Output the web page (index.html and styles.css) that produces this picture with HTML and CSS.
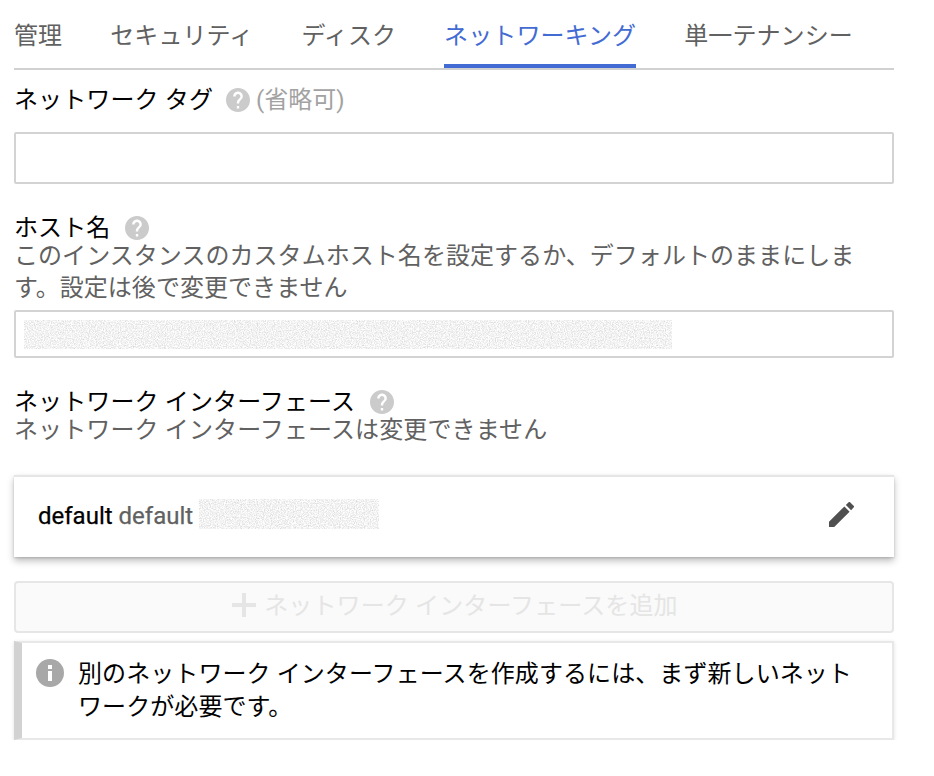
FILE: index.html
```html
<!DOCTYPE html>
<html lang="ja">
<head>
<meta charset="utf-8">
<title>ネットワーキング</title>
<link rel="stylesheet" href="styles.css">
</head>
<body>
<svg class="defs" width="0" height="0" aria-hidden="true">
  <filter id="grain" x="0" y="0" width="100%" height="100%" color-interpolation-filters="sRGB">
    <feTurbulence type="fractalNoise" baseFrequency="0.87" numOctaves="2" seed="4"/>
    <feColorMatrix values="0.3 0 0 0 0.8  0.3 0 0 0 0.8  0.3 0 0 0 0.8  0 0 0 0 1"/>
  </filter>
  <symbol id="help" viewBox="2 2 20 20"><path d="M12 2C6.48 2 2 6.48 2 12s4.48 10 10 10 10-4.48 10-10S17.52 2 12 2zm1 17h-2v-2h2v2zm2.07-7.75l-.9.92C13.45 12.9 13 13.5 13 15h-2v-.5c0-1.1.45-2.1 1.17-2.83l1.24-1.26c.37-.36.59-.86.59-1.41 0-1.1-.9-2-2-2s-2 .9-2 2H8c0-2.21 1.79-4 4-4s4 1.79 4 4c0 .88-.36 1.68-.93 2.25z"/></symbol>
</svg>
<main class="panel">
  <nav class="tabs">
    <a class="tab">管理</a>
    <a class="tab">セキュリティ</a>
    <a class="tab">ディスク</a>
    <a class="tab active">ネットワーキング</a>
    <a class="tab">単一テナンシー</a>
  </nav>

  <section class="field tags">
    <div class="label">ネットワーク タグ<svg class="help"><use href="#help"/></svg><span class="optional">(省略可)</span></div>
    <div class="input input-tags"></div>
  </section>

  <section class="field">
    <div class="label">ホスト名<svg class="help help-wide"><use href="#help"/></svg></div>
    <p class="desc desc-host">このインスタンスのカスタムホスト名を設定するか、デフォルトのままにします。設定は後で変更できません</p>
    <div class="input input-host"><svg class="grain grain-host"><rect width="100%" height="100%" filter="url(#grain)"/></svg></div>
  </section>

  <section class="field">
    <div class="label">ネットワーク インターフェース<svg class="help help-wide"><use href="#help"/></svg></div>
    <p class="desc">ネットワーク インターフェースは変更できません</p>
    <div class="card">
      <span class="name">default</span><span class="subnet">default</span>
      <svg class="grain grain-net"><rect width="100%" height="100%" filter="url(#grain)"/></svg>
      <svg class="edit" viewBox="3 3 18 18"><path d="M3 17.25V21h3.75L17.81 9.94l-3.75-3.75L3 17.25zM20.71 7.04a1 1 0 0 0 0-1.41l-2.34-2.34a1 1 0 0 0-1.41 0l-1.83 1.83 3.75 3.75 1.83-1.83z"/></svg>
    </div>
    <div class="add"><svg class="plus" viewBox="0 0 24 24"><path d="M10 0h4v10h10v4H14v10h-4V14H0v-4h10z"/></svg>ネットワーク インターフェースを追加</div>
    <div class="info">
      <svg class="info-icon" viewBox="0 0 28 28"><circle cx="14" cy="14" r="14"/><path d="M12 6h4v4h-4zM12 12h4v10h-4z"/></svg>
      <p class="info-text">別のネットワーク インターフェースを作成するには、まず新しいネットワークが必要です。</p>
    </div>
  </section>
</main>
</body>
</html>
```
FILE: styles.css
```css
* { box-sizing: border-box; }
body {
  margin: 0;
  background: #fff;
  color: #000;
  font: 24px/32px Roboto, "Noto Sans CJK JP", sans-serif;
  letter-spacing: .12px;
}
p { margin: 0; }
svg { display: block; flex: none; }
.defs { position: absolute; }
.panel { width: 880px; margin-left: 14px; }

.tabs {
  display: flex;
  gap: 48px;
  height: 70px;
  border-bottom: 2px solid #d1d1d1;
  color: #616161;
  white-space: nowrap;
  letter-spacing: .1px;
}
.tab { height: 68px; padding-top: 20px; }
.tab.active { color: #426bd3; border-bottom: 4px solid #426bd3; }

.field { margin-top: 32px; }
.field.tags { margin-top: 18px; }
.label { display: flex; align-items: center; height: 24px; white-space: nowrap; }
.help { width: 24px; height: 24px; margin-left: 13px; fill: #cbcbcb; }
.help-wide { margin-left: 14.5px; }
.optional { margin-left: 6px; color: #a2a2a2; letter-spacing: 0; }
.desc { color: #616161; }
.desc-host { letter-spacing: .05px; }
.input { border: 2px solid #d3d3d3; border-radius: 2px; }
.input-tags { height: 52px; margin-top: 20px; }
.input-host { height: 48px; margin-top: 6px; padding: 8px; }
.grain-host { width: 648px; height: 29px; }

.card {
  display: flex;
  align-items: center;
  height: 82px;
  margin-top: 29px;
  padding: 0 40px 0 24px;
  border-top: 2px solid #e6e6e6;
  box-shadow: 0 4px 7px rgba(0, 0, 0, .26), 0 1px 2px rgba(0, 0, 0, .14);
  letter-spacing: 0;
}
.name, .subnet { margin-top: -2px; -webkit-text-stroke: .25px; }
.subnet { margin-left: 6px; color: #616161; }
.grain-net { width: 180px; height: 30px; margin: -6px 0 0 6px; }
.edit { width: 25px; height: 25px; margin: -6px 0 0 auto; fill: #505050; }

.add {
  display: flex;
  align-items: center;
  justify-content: center;
  height: 52px;
  margin-top: 24px;
  padding: 0 0 2px 2px;
  border: 2px solid #e6e6e6;
  border-radius: 4px;
  background: #fafafa;
  color: #e5e5e5;
}
.plus { width: 24px; height: 24px; margin: -2px 8px 0 0; fill: #e5e5e5; }

.info {
  display: flex;
  height: 99px;
  margin-top: 8px;
  padding: 14px 14px 0;
  border: solid #e8e8e8;
  border-width: 2px 2px 2px 8px;
  border-left-color: #d2d2d2;
  box-shadow: 0 1px 4px rgba(0, 0, 0, .12);
}
.info-icon { width: 28px; height: 28px; margin-top: 2px; fill: #a8a8a8; }
.info-icon path { fill: #fff; }
.info-text { margin: 1px 0 0 14px; width: 785px; line-height: 33px; letter-spacing: .08px; }
```
